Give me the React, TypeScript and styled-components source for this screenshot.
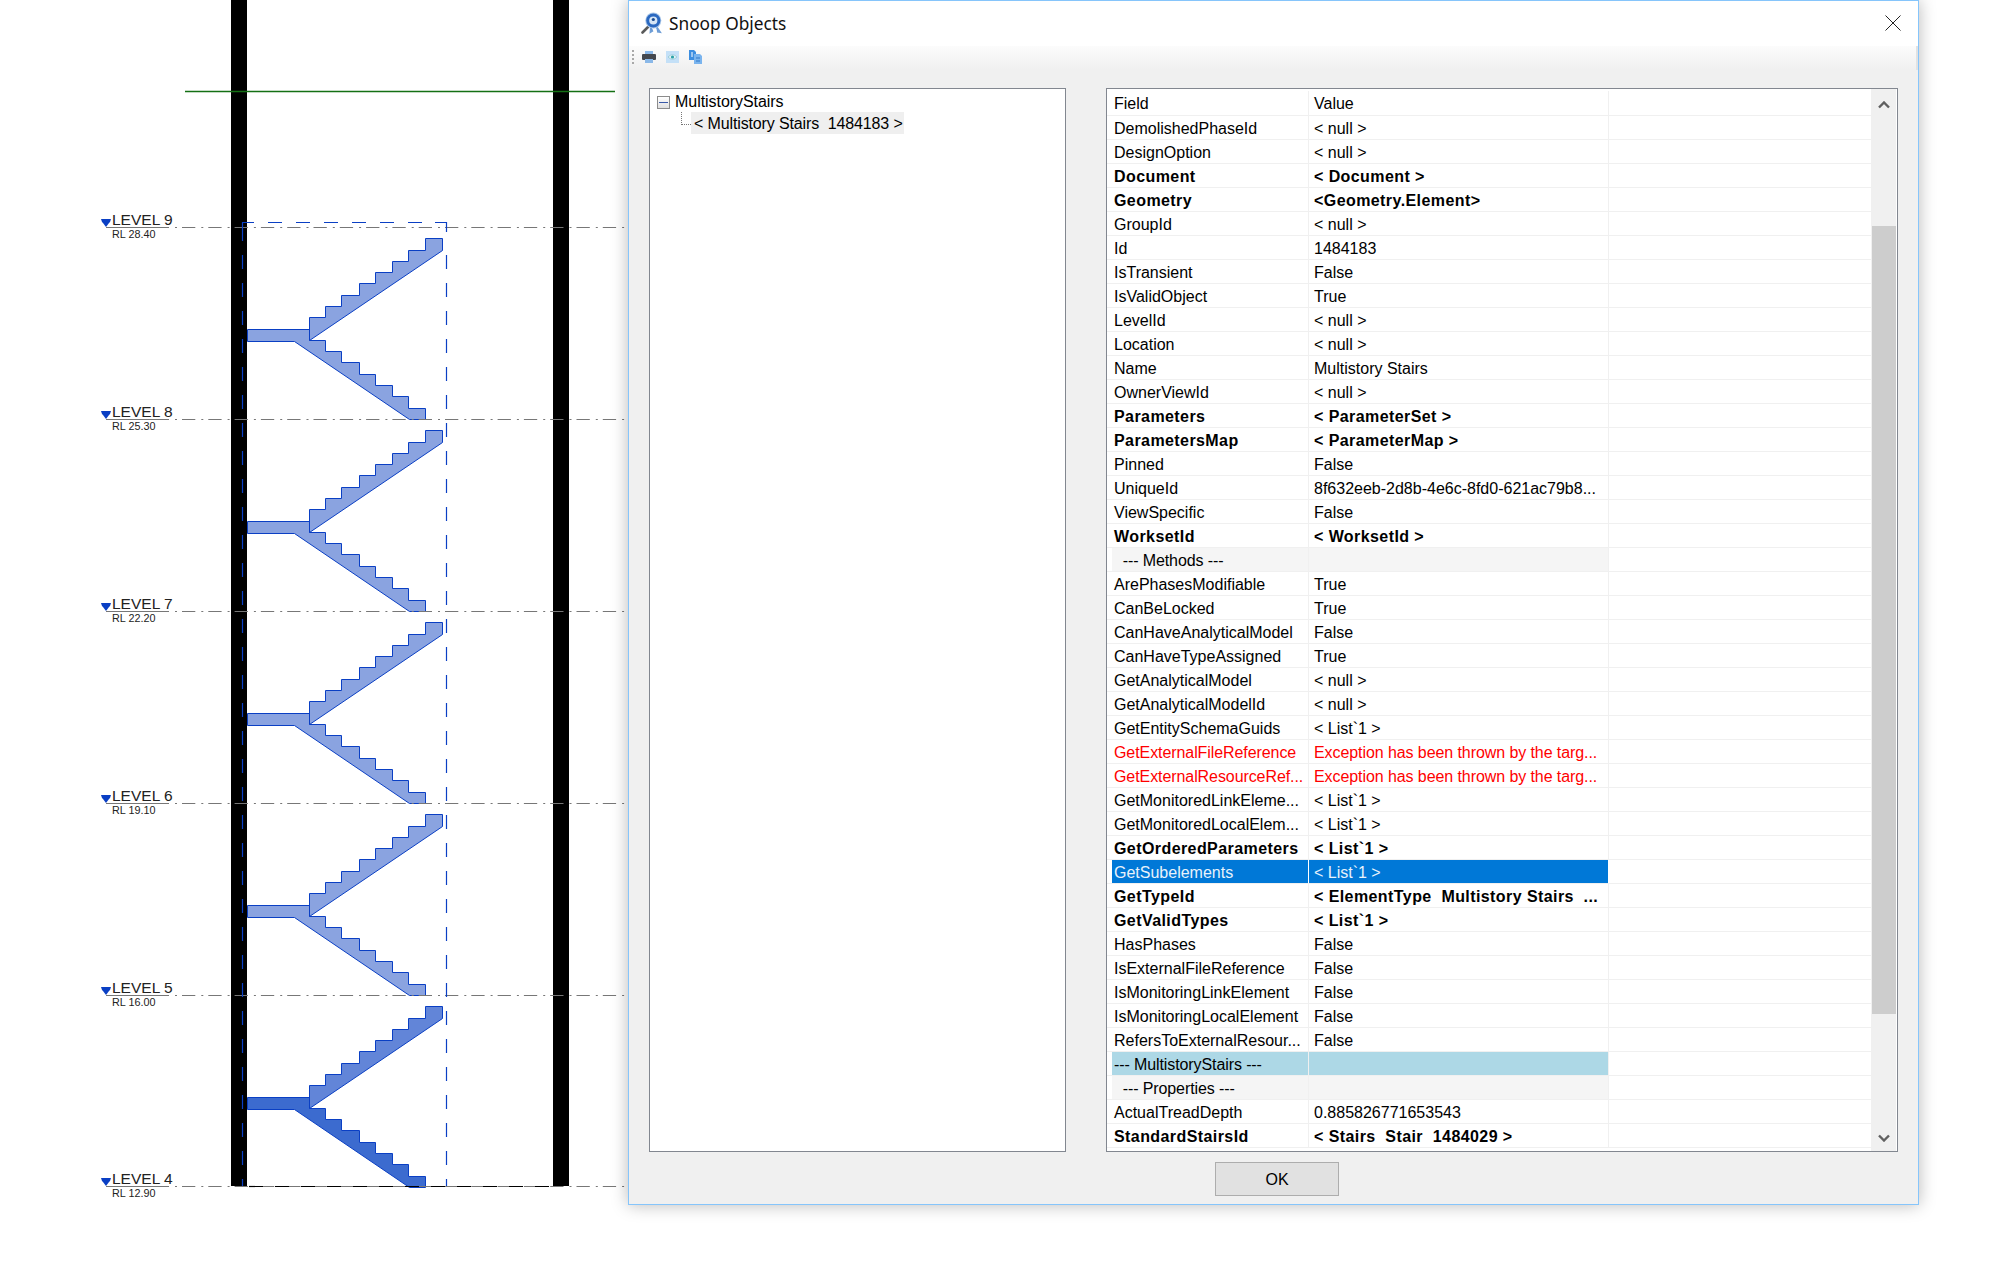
import React from "react";
import styled, { createGlobalStyle } from "styled-components";

const Global = createGlobalStyle`
  html, body { margin: 0; padding: 0; background: #fff; }
  body { width: 2000px; height: 1274px; overflow: hidden; font-family: "Liberation Sans", Arial, sans-serif; }
`;

const Page = styled.div`
  display: flex;
  align-items: flex-start;
  width: 2000px;
  height: 1274px;
  background: #fff;
`;

const Drawing = styled.svg`
  flex: 0 0 628px;
  width: 628px;
  height: 1274px;
  display: block;
`;

const Dialog = styled.section`
  flex: 0 0 1291px;
  box-sizing: border-box;
  width: 1291px;
  height: 1205px;
  border: 1px solid #86c5fb;
  background: #f0f0f0;
  box-shadow: 0 0 16px rgba(0, 0, 0, 0.28);
  display: flex;
  flex-direction: column;
`;

const TitleBar = styled.header`
  flex: 0 0 45px;
  box-sizing: border-box;
  background: #fff;
  display: flex;
  align-items: center;
  padding: 0 16px 1px 12px;
  gap: 6px;
`;

const TitleText = styled.span`
  font: 17.3px "Noto Sans", "Open Sans", sans-serif;
  color: #111;
  flex: 1;
`;

const CloseButton = styled.button`
  border: 0;
  background: none;
  padding: 0;
  width: 18px;
  height: 18px;
  display: flex;
`;

const Toolbar = styled.div`
  flex: 0 0 24px;
  box-sizing: border-box;
  display: flex;
  align-items: center;
  gap: 10px;
  padding: 0 0 2px 3px;
  background: linear-gradient(#fcfcfc, #f0f0f0);
  box-shadow: inset -2px 0 #e2e2e2;
`;

const Grip = styled.i`
  width: 2px;
  height: 15px;
  margin-right: -2px;
  background: repeating-linear-gradient(#a8a8a8 0 2px, transparent 2px 4px);
`;

const Body = styled.div`
  flex: 1;
  display: flex;
  gap: 40px;
  padding: 18px 0 0 20px;
  min-height: 0;
`;

const TreePanel = styled.div`
  box-sizing: border-box;
  width: 417px;
  height: 1064px;
  border: 1px solid #828790;
  background: #fff;
  padding: 3px 0 0 7px;
  font-size: 16px;
  color: #000;
`;

const TreeRoot = styled.div`
  display: flex;
  align-items: center;
  height: 20px;
`;

const Expander = styled.span`
  box-sizing: border-box;
  width: 13px;
  height: 13px;
  border: 1px solid #8b8b8b;
  background: linear-gradient(#fff, #dfdfdf);
  display: flex;
  align-items: center;
  justify-content: center;
  &::before {
    content: "";
    width: 9px;
    height: 1px;
    background: #3a5aa8;
  }
`;

const TreeLabel = styled.span`
  margin-left: 5px;
  letter-spacing: -0.05px;
`;

const TreeChild = styled.div`
  display: flex;
  align-items: flex-start;
  height: 22px;
  margin-left: 24px;
`;

const Connector = styled.i`
  width: 10px;
  height: 13px;
  border-left: 1px dotted #777;
  border-bottom: 1px dotted #777;
  box-sizing: border-box;
`;

const TreeSelected = styled.span`
  height: 22px;
  line-height: 22px;
  padding: 1px 3px 0;
  width: 213px;
  box-sizing: border-box;
  white-space: pre;
  letter-spacing: -0.13px;
  background: #efefef;
`;

const GridPanel = styled.div`
  box-sizing: border-box;
  width: 792px;
  height: 1064px;
  border: 1px solid #828790;
  background: #fff;
  display: flex;
  overflow: hidden;
  padding-right: 1px;
`;

const GridRows = styled.div`
  flex: 0 0 764px;
  overflow: hidden;
  font-size: 16px;
`;

const Row = styled.div<{ $first?: boolean }>`
  box-sizing: border-box;
  height: ${(p) => (p.$first ? 27 : 24)}px;
  border-bottom: 1px solid #f0f0f0;
  padding-left: 5px;
  display: flex;
  ${(p) => p.$first && "padding-top: 2px;"}
`;

const spacing: Record<string, string> = { b: "0.42px", err: "-0.08px", sub: "-0.1px", head: "-0.1px" };

const Cell = styled.div<{ $w: number; $pad: number; $kind: string; $bold?: boolean }>`
  flex: 0 0 ${(p) => p.$w}px;
  box-sizing: border-box;
  border-right: 1px solid ${(p) => (p.$kind === "sel" ? "#fff" : "#f0f0f0")};
  padding: 2px 0 0 ${(p) => p.$pad}px;
  line-height: 22px;
  white-space: pre;
  overflow: hidden;
  letter-spacing: ${(p) => spacing[p.$kind] ?? "0"};
  font-weight: ${(p) => (p.$bold ? 700 : 400)};
  color: ${(p) => (p.$kind === "err" ? "#ff0000" : p.$kind === "sel" ? "#e8f2fb" : "#000")};
  background: ${(p) =>
    p.$kind === "sel" ? "#0078d7" : p.$kind === "head" ? "#add8e6" : p.$kind === "sub" ? "#f5f5f5" : "transparent"};
`;

const ScrollBar = styled.div`
  flex: 0 0 25px;
  background: #f0f0f0;
  display: flex;
  flex-direction: column;
  align-items: center;
`;

const ScrollBtn = styled.div<{ $h: number; $offset?: number }>`
  flex: 0 0 auto;
  box-sizing: border-box;
  height: ${(p) => p.$h}px;
  padding-top: ${(p) => p.$offset ?? 0}px;
  display: flex;
  align-items: center;
  justify-content: center;
`;

const Thumb = styled.div`
  margin-top: 105px;
  width: 24px;
  margin-left: 1px;
  height: 788px;
  background: #cdcdcd;
`;

const Spacer = styled.div`
  flex: 1;
`;

const Footer = styled.footer`
  flex: 0 0 auto;
  padding: 11px 0 8px 586px;
  display: flex;
`;

const OkButton = styled.button`
  box-sizing: border-box;
  width: 124px;
  height: 34px;
  background: #e1e1e1;
  border: 1px solid #adadad;
  font: 16px "Liberation Sans", Arial, sans-serif;
  color: #000;
  padding: 1px 0 0;
`;

const LevelName = styled.text`
  font: 15.5px "Liberation Sans", Arial, sans-serif;
  fill: #222;
`;

const LevelRl = styled.text`
  font: 10.8px "Liberation Sans", Arial, sans-serif;
  fill: #222;
`;

type R = [string, string, string?];
const rows: R[] = [
  ["DemolishedPhaseId", "< null >"],
  ["DesignOption", "< null >"],
  ["Document", "< Document >", "b"],
  ["Geometry", "<Geometry.Element>", "b"],
  ["GroupId", "< null >"],
  ["Id", "1484183"],
  ["IsTransient", "False"],
  ["IsValidObject", "True"],
  ["LevelId", "< null >"],
  ["Location", "< null >"],
  ["Name", "Multistory Stairs"],
  ["OwnerViewId", "< null >"],
  ["Parameters", "< ParameterSet >", "b"],
  ["ParametersMap", "< ParameterMap >", "b"],
  ["Pinned", "False"],
  ["UniqueId", "8f632eeb-2d8b-4e6c-8fd0-621ac79b8..."],
  ["ViewSpecific", "False"],
  ["WorksetId", "< WorksetId >", "b"],
  ["  --- Methods ---", "", "sub"],
  ["ArePhasesModifiable", "True"],
  ["CanBeLocked", "True"],
  ["CanHaveAnalyticalModel", "False"],
  ["CanHaveTypeAssigned", "True"],
  ["GetAnalyticalModel", "< null >"],
  ["GetAnalyticalModelId", "< null >"],
  ["GetEntitySchemaGuids", "< List`1 >"],
  ["GetExternalFileReference", "Exception has been thrown by the targ...", "err"],
  ["GetExternalResourceRef...", "Exception has been thrown by the targ...", "err"],
  ["GetMonitoredLinkEleme...", "< List`1 >"],
  ["GetMonitoredLocalElem...", "< List`1 >"],
  ["GetOrderedParameters", "< List`1 >", "b"],
  ["GetSubelements", "< List`1 >", "sel"],
  ["GetTypeId", "< ElementType  Multistory Stairs  ...", "b"],
  ["GetValidTypes", "< List`1 >", "b"],
  ["HasPhases", "False"],
  ["IsExternalFileReference", "False"],
  ["IsMonitoringLinkElement", "False"],
  ["IsMonitoringLocalElement", "False"],
  ["RefersToExternalResour...", "False"],
  ["--- MultistoryStairs ---", "", "head"],
  ["  --- Properties ---", "", "sub"],
  ["ActualTreadDepth", "0.885826771653543"],
  ["StandardStairsId", "< Stairs  Stair  1484029 >", "b"],
];

const upper = [686,450,686,382,736,382,736,349,784,349,784,316,836,316,836,280,886,280,886,247,937,247,937,214,985,214,985,181,1036,181,1036,145,1087,145,1087,180];
const lower = [500,418,686,418,686,451,736,451,736,484,784,484,784,517,836,517,836,553,886,553,886,586,937,586,937,619,985,619,985,655,1036,655,1036,688,986,688,642,454,500,454];
const toPts = (a: number[], L: number) => {
  const out: string[] = [];
  for (let i = 0; i < a.length; i += 2) out.push(`${Math.round(80 + a[i] / 3) + 0.5},${Math.round(L + (a[i + 1] - 112) / 3) + 0.5}`);
  return out.join(" ");
};

const BLUE = "#0a3fc4";
const levels = [
  { n: 9, rl: "28.40", y: 227 },
  { n: 8, rl: "25.30", y: 419 },
  { n: 7, rl: "22.20", y: 611 },
  { n: 6, rl: "19.10", y: 803 },
  { n: 5, rl: "16.00", y: 995 },
  { n: 4, rl: "12.90", y: 1186 },
];

const Elevation = () => (
  <Drawing viewBox="0 0 628 1274">
    <rect x="231" y="0" width="16" height="1186" fill="#000" />
    <rect x="553" y="0" width="16" height="1186" fill="#000" />
    <line x1="185" x2="615" y1="91.5" y2="91.5" stroke="#147014" strokeWidth="1.4" />
    {levels.slice(0, 5).map((l, i) => (
      <g key={l.n} strokeWidth="1" stroke={BLUE}>
        <polygon points={toPts(lower, l.y)} fill={i === 4 ? "#3c6bcf" : "#8aa3e0"} />
        <polygon points={toPts(upper, l.y)} fill={i === 4 ? "#6285d8" : "#8aa3e0"} />
      </g>
    ))}
    {levels.map((l) => (
      <g key={l.n}>
        <line x1="106" x2="168" y1={l.y + 0.5} y2={l.y + 0.5} stroke="#777" />
        <line x1="155.7" x2="625" y1={l.y + 0.5} y2={l.y + 0.5} stroke="#777" strokeWidth="1.2" strokeDasharray="13.3 6 2 5" />
        <polygon points={`101,${l.y - 8} 111,${l.y - 8} 110,${l.y - 5} 109,${l.y - 4} 106,${l.y} 103,${l.y - 4} 102,${l.y - 5}`} fill={BLUE} />
        <LevelName x="112" y={l.y - 2}>{`LEVEL ${l.n}`}</LevelName>
        <LevelRl x="112" y={l.y + 11}>{`RL ${l.rl}`}</LevelRl>
      </g>
    ))}
    <line x1="247" x2="553" y1="1186.5" y2="1186.5" stroke="#000" strokeDasharray="14 12" strokeDashoffset="-2" strokeWidth="1.2" />
    <g stroke={BLUE} strokeWidth="1.2" fill="none">
      <polyline points="242.5,241 242.5,222.5 254,222.5" />
      <line x1="268" x2="446.5" y1="222.5" y2="222.5" strokeDasharray="14 14" />
      <line x1="242.5" x2="242.5" y1="255" y2="1186" strokeDasharray="14 14" />
      <polyline points="435,222.5 446.5,222.5 446.5,232" />
      <line x1="446.5" x2="446.5" y1="255" y2="1186" strokeDasharray="14 14" />
    </g>
  </Drawing>
);

const Logo = () => (
  <svg width="22" height="22" viewBox="0 0 22 22">
    <path d="M7 15 L1.5 20.5" stroke="#5a5a5a" strokeWidth="2.6" strokeLinecap="round" />
    <path d="M10 14 L9.5 20 L12 18.5 M15 14 L19 20 L16 19.5" fill="#5d92d6" stroke="#6f9ed6" strokeWidth="1.8" />
    <circle cx="12.3" cy="8.5" r="8" fill="#a9c6e8" />
    <circle cx="12.3" cy="8.5" r="5.6" fill="#d6e6f6" stroke="#2a68c0" strokeWidth="3" />
    <circle cx="12.3" cy="7.5" r="1.6" fill="#1a4a90" />
  </svg>
);

const PrintIcon = () => (
  <svg width="14" height="12" viewBox="0 0 14 12">
    <rect x="3" y="0" width="8" height="3" fill="#8ab8e8" />
    <rect x="0" y="3" width="14" height="6" rx="1" fill="#44484e" />
    <rect x="3" y="8" width="8" height="4" fill="#8ab8e8" />
  </svg>
);

const EyeIcon = () => (
  <svg width="13" height="12" viewBox="0 0 13 12">
    <rect width="13" height="12" fill="#c4e0f7" />
    <path d="M2 6 Q6.5 1.5 11 6 Q6.5 10.5 2 6Z" fill="#e8f5f8" stroke="#7fbcc8" strokeWidth="0.6" />
    <circle cx="6.5" cy="6" r="1.6" fill="#2aa0a8" />
  </svg>
);

const DocsIcon = () => (
  <svg width="13" height="14" viewBox="0 0 13 14">
    <path d="M0 0 H5 L7 2 V10 H0Z" fill="#3d8ee0" />
    <path d="M5 4 H11 L13 6 V14 H5Z" fill="#7ab4ee" />
    <path d="M7 8 H11 M7 11 H11" stroke="#2e78c8" strokeWidth="1" />
    <path d="M3 2 V7" stroke="#fff" strokeWidth="1" />
  </svg>
);

const Chevron = ({ down }: { down?: boolean }) => (
  <svg width="12" height="8" viewBox="0 0 12 8">
    <path d={down ? "M1 1.5 L6 6.5 L11 1.5" : "M1 6.5 L6 1.5 L11 6.5"} fill="none" stroke="#606060" strokeWidth="2.4" />
  </svg>
);

export default function App() {
  return (
    <Page>
      <Global />
      <Elevation />
      <Dialog>
        <TitleBar>
          <Logo />
          <TitleText>Snoop Objects</TitleText>
          <CloseButton aria-label="Close">
            <svg width="18" height="18" viewBox="0 0 18 18">
              <path d="M1.5 1.5 L16.5 16.5 M16.5 1.5 L1.5 16.5" stroke="#222" strokeWidth="1" />
            </svg>
          </CloseButton>
        </TitleBar>
        <Toolbar>
          <Grip />
          <PrintIcon />
          <EyeIcon />
          <DocsIcon />
        </Toolbar>
        <Body>
          <TreePanel>
            <TreeRoot>
              <Expander />
              <TreeLabel>MultistoryStairs</TreeLabel>
            </TreeRoot>
            <TreeChild>
              <Connector />
              <TreeSelected>{"< Multistory Stairs  1484183 >"}</TreeSelected>
            </TreeChild>
          </TreePanel>
          <GridPanel>
            <GridRows>
              <Row $first>
                <Cell $w={197} $pad={2} $kind="">Field</Cell>
                <Cell $w={300} $pad={5} $kind="">Value</Cell>
              </Row>
              {rows.map(([f, v, k]) => (
                <Row key={f}>
                  <Cell $w={197} $pad={2} $kind={k ?? ""} $bold={k === "b"}>{f}</Cell>
                  <Cell $w={300} $pad={5} $kind={k ?? ""} $bold={k === "b"}>{v}</Cell>
                </Row>
              ))}
            </GridRows>
            <ScrollBar>
              <ScrollBtn $h={32}><Chevron /></ScrollBtn>
              <Thumb />
              <Spacer />
              <ScrollBtn $h={30} $offset={4}><Chevron down /></ScrollBtn>
            </ScrollBar>
          </GridPanel>
        </Body>
        <Footer>
          <OkButton>OK</OkButton>
        </Footer>
      </Dialog>
    </Page>
  );
}
